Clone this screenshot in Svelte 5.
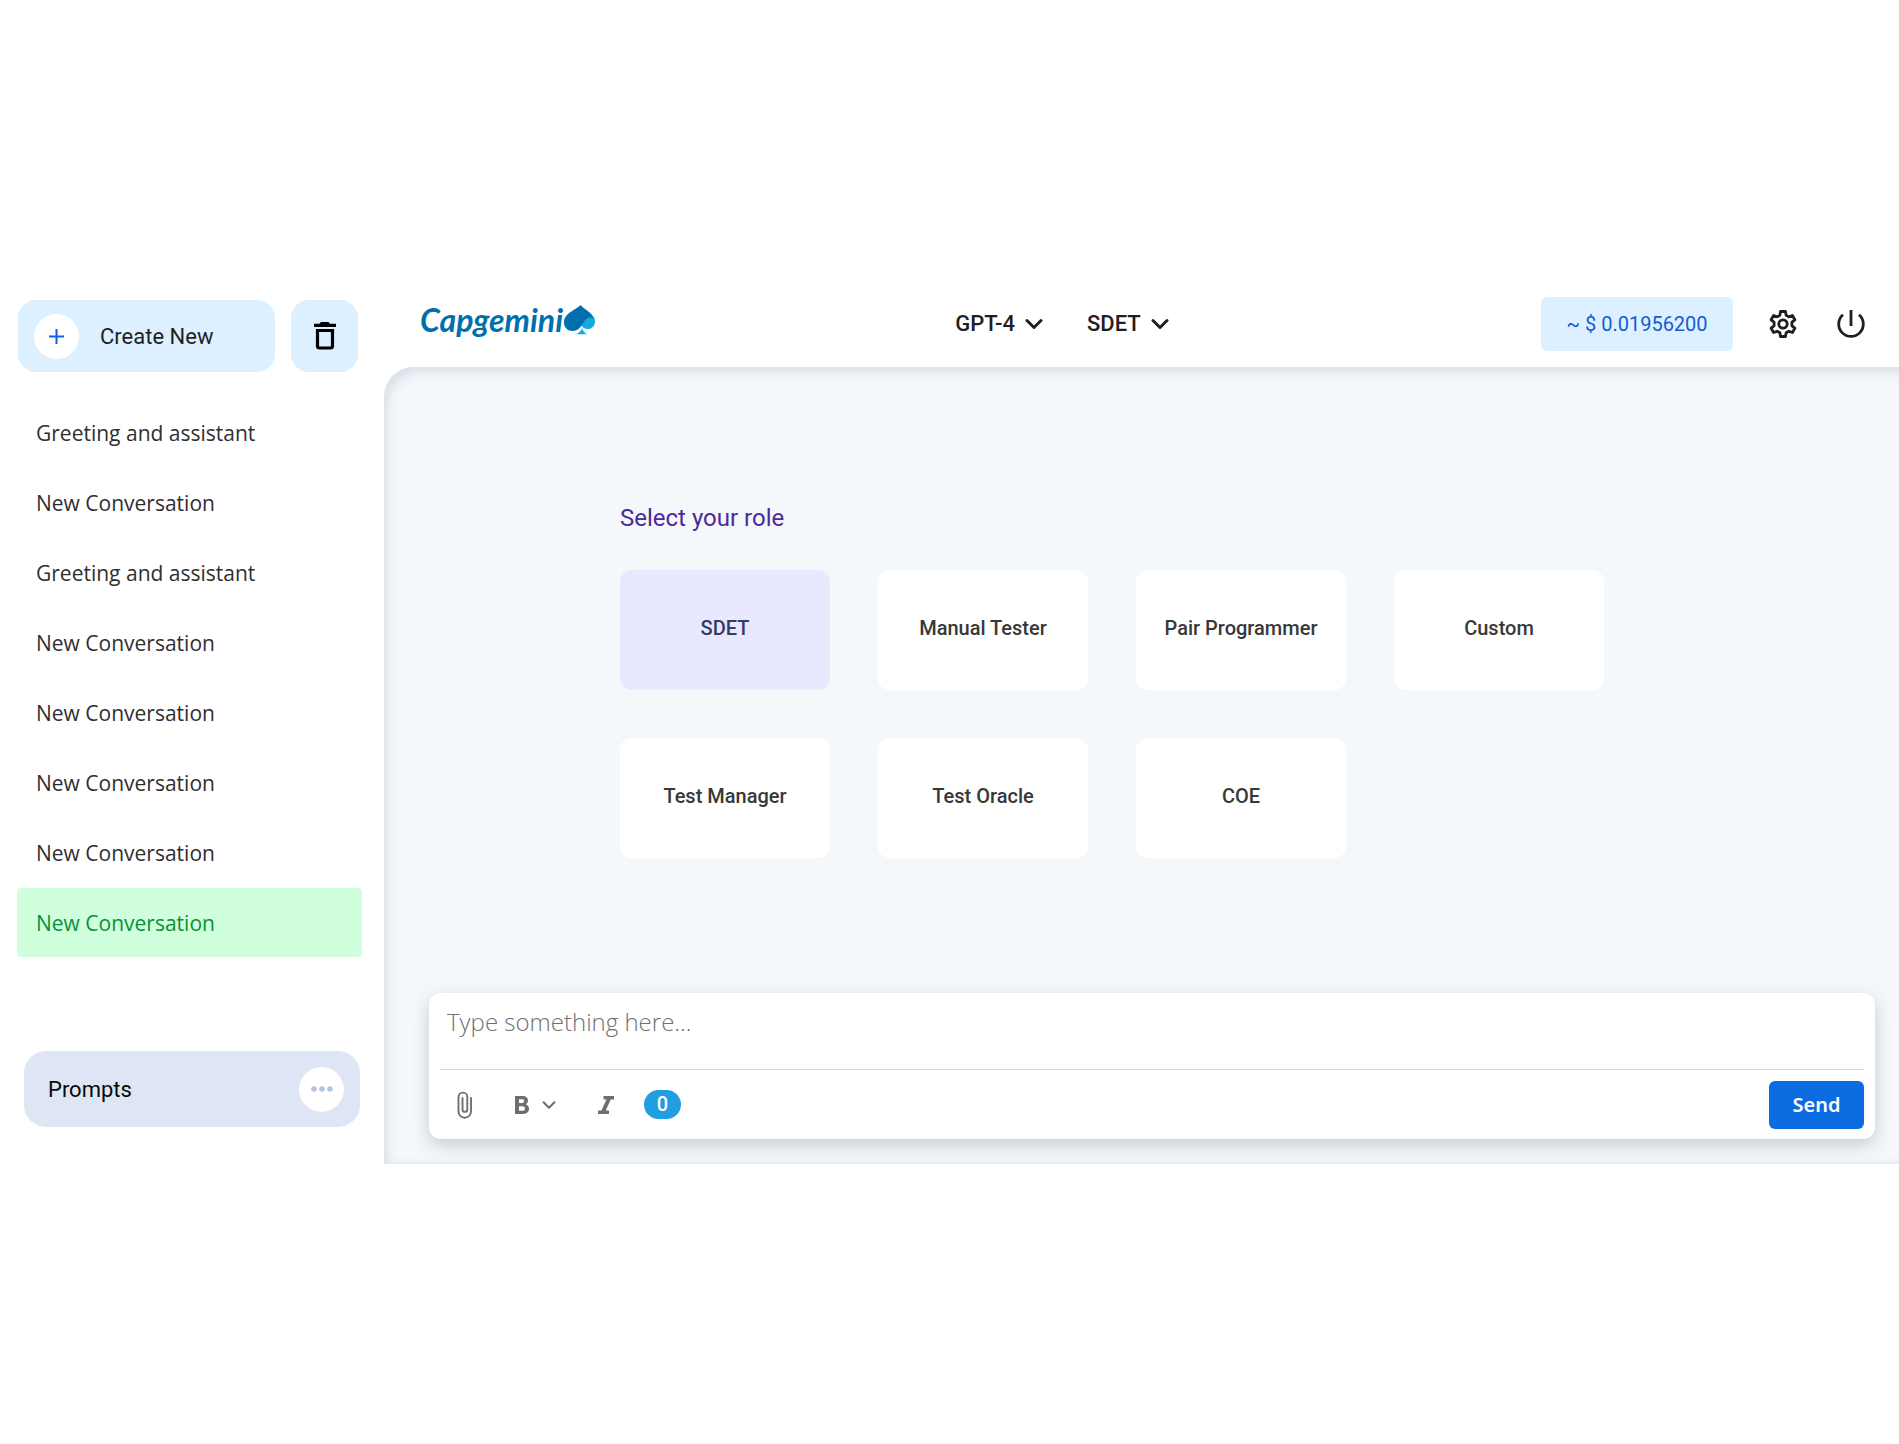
<script>
  const conversations = [
    'Greeting and assistant',
    'New Conversation',
    'Greeting and assistant',
    'New Conversation',
    'New Conversation',
    'New Conversation',
    'New Conversation',
    'New Conversation'
  ];
  const roles = ['SDET', 'Manual Tester', 'Pair Programmer', 'Custom', 'Test Manager', 'Test Oracle', 'COE'];

  let activeConversation = $state(7);
  let role = $state('SDET');
  let model = $state('GPT-4');
  let message = $state('');
</script>

{#snippet chevron(size, weight)}
  <svg width={size} height={size} viewBox="0 0 18 18" fill="none" stroke="currentColor" stroke-width={weight} stroke-linecap="round" stroke-linejoin="round" aria-hidden="true">
    <path d="M2 5.5 9 12.5 16 5.5" />
  </svg>
{/snippet}

<div class="app">
  <aside class="sidebar">
    <div class="actions">
      <button class="create">
        <span class="disc plus">
          <svg width="15" height="15" viewBox="0 0 15 15" stroke="currentColor" stroke-width="2" aria-hidden="true">
            <path d="M7.500 0v15M0 7.500h15" />
          </svg>
        </span>
        Create New
      </button>
      <button class="trash" aria-label="Delete all conversations">
        <svg width="22" height="28" viewBox="0 0 22 28" aria-hidden="true">
          <path d="M0 1.8h5.5L7 0h7.500l1.500 1.800H22v3.200H0z" fill="#000" />
          <path d="M3.500 8.500h15v15.500a2 2 0 0 1-2 2h-11a2 2 0 0 1-2-2z" fill="none" stroke="#000" stroke-width="3.200" />
        </svg>
      </button>
    </div>

    <nav class="conversations" aria-label="Conversations">
      {#each conversations as name, i}
        <button class="conversation" class:active={i === activeConversation} onclick={() => (activeConversation = i)}>{name}</button>
      {/each}
    </nav>

    <button class="prompts">
      Prompts
      <span class="disc dots">
        <svg width="24" height="8" viewBox="0 0 24 8" fill="currentColor" aria-hidden="true">
          <circle cx="4" cy="4" r="2.800" /><circle cx="12" cy="4" r="2.800" /><circle cx="20" cy="4" r="2.800" />
        </svg>
      </span>
    </button>
  </aside>

  <div class="content">
    <header>
      <a class="logo" href="/" aria-label="Capgemini">
        <span>Capgemini</span>
        <svg width="31" height="30" viewBox="0 0 31 30" aria-hidden="true">
          <path d="M11 29.300c4-1 6-2.800 7.200-6.300.8 2.800 2 4.800 5 6.300z" fill="#12abdb" />
          <path d="M17 19.500c1.500 3.500 4.500 5 7.800 4.500 4-.6 6.200-3.800 6.200-7.500 0-1.800-.5-3.200-1.300-4.500L22 11z" fill="#12abdb" />
          <path d="M16.500 0C12 5 0 8 0 17.500 0 22.500 4 26 8.500 26c10.500 0 10-13 17.500-13.500 1.800 0 3.200.6 4.200 1.500C28.500 7.500 20.500 4.800 16.500 0z" fill="#0070ad" />
        </svg>
      </a>
      <div class="pickers">
        <label class="picker">
          <select bind:value={model} aria-label="Model">
            <option>GPT-4</option>
          </select>
          {@render chevron(18, 3)}
        </label>
        <label class="picker">
          <select bind:value={role} aria-label="Role">
            {#each roles as name}<option>{name}</option>{/each}
          </select>
          {@render chevron(18, 3)}
        </label>
      </div>
      <div class="tools">
        <span class="cost">~ $ 0.01956200</span>
        <button class="icon" aria-label="Settings">
          <svg width="28" height="28" viewBox="0 0 28 28" fill="none" stroke="#1f1f1f" stroke-width="2.800" stroke-linejoin="round" aria-hidden="true">
            <path d="M11.500 1.500h5l.6 3.700 2.700 1.600 3.600-1.300 2.500 4.300-3 2.400v3.600l3 2.400-2.500 4.300-3.600-1.300-2.700 1.600-.6 3.700h-5l-.6-3.700-2.700-1.600-3.600 1.300-2.500-4.300 3-2.400v-3.600l-3-2.400 2.500-4.300 3.600 1.300 2.700-1.600z" />
            <circle cx="14" cy="14" r="4.200" />
          </svg>
        </button>
        <button class="icon" aria-label="Sign out">
          <svg width="28" height="28" viewBox="0 0 28 28" fill="none" stroke="#1f1f1f" stroke-width="2.800" aria-hidden="true">
            <path d="M14 0v16M6 4.800a12.300 12.300 0 1 0 16 0" />
          </svg>
        </button>
      </div>
    </header>

    <main>
      <section class="roles">
        <h1>Select your role</h1>
        <div class="grid">
          {#each roles as name}
            <button class="card" class:selected={name === role} onclick={() => (role = name)}>{name}</button>
          {/each}
        </div>
      </section>

      <form class="composer" onsubmit={(e) => e.preventDefault()}>
        <textarea rows="1" bind:value={message} placeholder="Type something here..." aria-label="Message"></textarea>
        <div class="toolbar">
          <button type="button" class="tool" aria-label="Attach file">
            <svg width="16" height="28" viewBox="0 0 16 28" fill="none" stroke="currentColor" stroke-width="1.900" stroke-linecap="round" aria-hidden="true">
              <path d="M14 7v13.500a6 6 0 0 1-12.500 0V6a4.300 4.300 0 0 1 8.800 0v12.500a2.300 2.300 0 0 1-4.800 0V7" />
            </svg>
          </button>
          <button type="button" class="tool" aria-label="Bold">
            <svg width="14" height="18" viewBox="0 0 14 18" aria-hidden="true">
              <path fill="currentColor" fill-rule="evenodd" d="M0 0h7.500C11 0 13 1.800 13 4.600c0 1.700-.8 3-2.200 3.700C12.800 9 14 10.600 14 12.800 14 16 11.700 18 8 18H0zM4 3.200v3.900h3c1.300 0 2.100-.7 2.100-2s-.8-1.900-2.100-1.900zM4 10.200v4.600h3.500c1.500 0 2.400-.8 2.400-2.300s-.9-2.300-2.400-2.300z" />
            </svg>
            {@render chevron(14, 2.6)}
          </button>
          <button type="button" class="tool" aria-label="Italic">
            <svg width="16" height="18" viewBox="0 0 16 18" fill="currentColor" aria-hidden="true">
              <path d="M5.500 0H16v3.600h-3.300L7.800 14.400h3.200V18H0v-3.600h3.500L8.400 3.600H5.500z" />
            </svg>
          </button>
          <span class="count">0</span>
          <button type="submit" class="send">Send</button>
        </div>
      </form>
    </main>
  </div>
</div>

<style>
  :global(body) {
    margin: 0;
    background: #fff;
  }

  .app {
    display: flex;
    padding: 280px 0;
    font-family: Roboto, sans-serif;
    color: #1f1f1f;
  }

  button,
  select,
  textarea {
    font: inherit;
    color: inherit;
    border: 0;
    padding: 0;
    background: none;
  }

  button,
  select {
    cursor: pointer;
  }

  svg {
    display: block;
    flex: none;
  }

  .sidebar {
    flex: none;
    width: 384px;
    box-sizing: border-box;
    padding: 20px 22px 37px 17px;
    display: flex;
    flex-direction: column;
  }

  .actions {
    display: flex;
    gap: 16px;
    padding: 0 4px 0 1px;
    margin-bottom: 26px;
  }

  .create,
  .trash {
    height: 72px;
    border-radius: 18px;
    background: #ddf0ff;
  }

  .create {
    flex: 1;
    display: flex;
    align-items: center;
    gap: 21px;
    padding-left: 16px;
    font-size: 22px;
  }

  .trash {
    width: 67px;
    display: grid;
    place-items: center;
  }

  .disc {
    width: 45px;
    height: 45px;
    border-radius: 50%;
    background: #fff;
    display: grid;
    place-items: center;
  }

  .plus {
    color: #0b61e0;
  }

  .dots {
    color: #b3c3e6;
  }

  .conversations {
    display: flex;
    flex-direction: column;
    gap: 1px;
  }

  .conversation {
    height: 69px;
    padding-left: 19px;
    border-radius: 4px;
    text-align: left;
    font-family: 'Open Sans', sans-serif;
    font-size: 21px;
    font-weight: 500;
    color: #2f2f2f;
  }

  .conversation.active {
    background: #cfffdc;
    color: #089138;
  }

  .prompts {
    display: flex;
    align-items: center;
    justify-content: space-between;
    height: 76px;
    margin: auto 2px 0 7px;
    padding: 0 16px 0 24px;
    border-radius: 22px;
    background: #dee5f5;
    font-size: 22px;
    color: #0a0a0a;
  }

  .content {
    flex: 1;
    min-width: 0;
    display: flex;
    flex-direction: column;
  }

  header {
    height: 87px;
    box-sizing: border-box;
    padding: 0 30px 0 36px;
    display: flex;
    align-items: center;
    justify-content: space-between;
  }

  .logo {
    display: flex;
    align-items: center;
    gap: 1px;
    padding-bottom: 8px;
    color: #0070ad;
    font-family: Lato, sans-serif;
    font-size: 32px;
    font-style: italic;
    font-weight: 700;
    line-height: 40px;
    text-decoration: none;
  }

  .pickers {
    display: flex;
    gap: 44px;
    margin-right: 12px;
  }

  .picker {
    display: flex;
    align-items: center;
    gap: 10px;
  }

  .picker select {
    appearance: none;
    field-sizing: content;
    font-size: 22px;
    font-weight: 500;
  }

  .tools {
    display: flex;
    align-items: center;
    gap: 32px;
  }

  .cost {
    width: 192px;
    line-height: 54px;
    border-radius: 6px;
    background: #ddf0ff;
    color: #145bd7;
    font-size: 20px;
    text-align: center;
  }

  .icon {
    padding: 4px;
  }

  main {
    flex: 1;
    padding: 134px 24px 25px 45px;
    border-top-left-radius: 30px;
    background: #f4f8fb;
    box-shadow:
      inset 6px 8px 10px -2px #dae1e8,
      inset 0 -6px 6px -5px #dce3ea;
    display: flex;
    flex-direction: column;
    gap: 135px;
  }

  .roles {
    padding: 0 80px 0 191px;
  }

  h1 {
    margin: 0 0 35px;
    font-size: 24px;
    line-height: 34px;
    font-weight: 400;
    color: #4c2a9a;
  }

  .grid {
    display: grid;
    grid-template-columns: repeat(auto-fill, 210px);
    gap: 48px;
  }

  .card {
    height: 120px;
    padding-bottom: 4px;
    border-radius: 12px;
    background: #fff;
    font-size: 20px;
    font-weight: 500;
    color: #383838;
  }

  .card.selected {
    background: #e8e8ff;
    color: #363a66;
  }

  .composer {
    display: flex;
    flex-direction: column;
    padding: 0 11px;
    border-radius: 12px;
    background: #fff;
    box-shadow: 0 6px 18px rgba(0, 0, 0, 0.18);
  }

  textarea {
    height: 77px;
    box-sizing: border-box;
    padding: 13px 7px;
    border-bottom: 1px solid #d6d6d6;
    outline: 0;
    resize: none;
    font-family: 'Open Sans', sans-serif;
    font-size: 24px;
    line-height: 32px;
    font-weight: 300;
  }

  textarea::placeholder {
    color: #707070;
    opacity: 1;
  }

  .toolbar {
    height: 69px;
    display: flex;
    align-items: center;
    padding-left: 17px;
    color: #6f6f6f;
  }

  .tool {
    display: flex;
    align-items: center;
    gap: 13px;
  }

  .tool + .tool {
    margin-left: 42px;
  }

  .count {
    width: 37px;
    margin-left: 30px;
    border-radius: 15px;
    background: #229de0;
    color: #fff;
    font-size: 20px;
    font-weight: 500;
    line-height: 29px;
    text-align: center;
  }

  .send {
    width: 95px;
    height: 48px;
    margin-left: auto;
    border-radius: 6px;
    background: #0b6be0;
    color: #fff;
    font-family: 'Noto Sans', sans-serif;
    font-size: 20px;
    font-weight: 600;
  }
</style>
